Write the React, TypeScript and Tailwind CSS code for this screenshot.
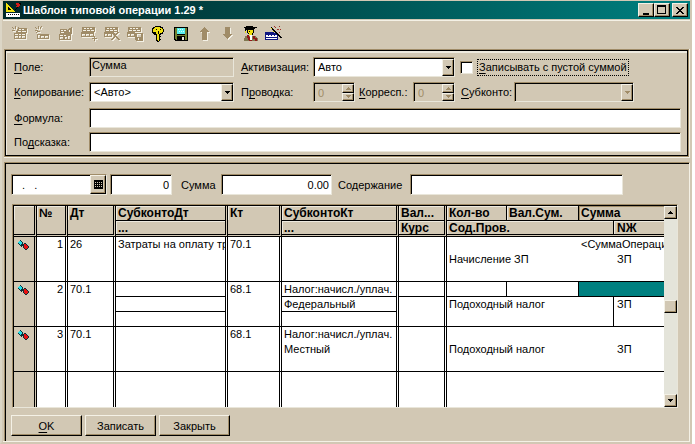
import { ReactNode } from 'react'
import clsx from 'clsx'

const SUNKEN =
   'border border-t-[#a08c68] border-l-[#a08c68] border-r-[#e9e6da] border-b-[#e9e6da] shadow-[inset_1px_1px_0_#000] rounded-none outline-none'
const RAISED =
   'border border-t-[#f4f1e6] border-l-[#f4f1e6] border-r-black border-b-black shadow-[inset_-1px_-1px_0_#a08c68] bg-[#d2c8b4]'

interface IRecord {
   num: string
   dt: string
   subDt: string[]
   kt: string
   subKt: string[]
   sum: string
   content: string
   journal: string
   active?: boolean
}

const records: IRecord[] = [
   {
      num: '1',
      dt: '26',
      subDt: ['Затраты на оплату труда'],
      kt: '70.1',
      subKt: [],
      sum: '<СуммаОперации>',
      content: 'Начисление ЗП',
      journal: 'ЗП',
   },
   {
      num: '2',
      dt: '70.1',
      subDt: [],
      kt: '68.1',
      subKt: ['Налог:начисл./уплач.', 'Федеральный'],
      sum: '',
      content: 'Подоходный налог',
      journal: 'ЗП',
      active: true,
   },
   {
      num: '3',
      dt: '70.1',
      subDt: [],
      kt: '68.1',
      subKt: ['Налог:начисл./уплач.', 'Местный'],
      sum: '',
      content: 'Подоходный налог',
      journal: 'ЗП',
   },
]

const Icon: React.FC<{ children: ReactNode }> = ({ children }) => (
   <svg width="18" height="18" viewBox="0 0 18 18" shapeRendering="crispEdges" fill="none" aria-hidden="true">
      {children}
   </svg>
)

// disabled glyph: a light copy one pixel down and right, then the shade colour
const Etched: React.FC<{ d: string }> = ({ d }) => (
   <Icon>
      <path d={d} fill="#f4f1e6" fillRule="evenodd" transform="translate(1 1)" />
      <path d={d} fill="#a08c68" fillRule="evenodd" />
   </Icon>
)

const SHEET_TOP = 'M1 1h13v5h-13z M3 2v1h2v-1z M6 2v1h2v-1z M9 2v1h2v-1z M2 4v1h3v-1z M6 4v1h3v-1z M10 4v1h3v-1z'
const SHEET_HALF = ' M0 6h8v5h-8z M1 8v2h2v-2z M4 8v2h3v-2z'

const toolbar: { label: string; disabled?: boolean; icon: ReactNode }[] = [
   {
      label: 'Новая операция',
      disabled: true,
      icon: (
         <Etched d="M0 1h1v1h-1z M3 0h1v3h-1z M6 1h1v1h-1z M1 2h1v1h-1z M5 2h1v1h-1z M0 4h3v1h-3z M5 2h10v5h-11v-2h1z M7 3v1h2v-1z M10 3v1h2v-1z M6 5v1h3v-1z M10 5v1h4v-1z M2 7h12v6h-12z M3 8v1h3v-1z M7 8v1h2v-1z M10 8v1h3v-1z M3 10v2h3v-2z M7 10v2h2v-2z M10 10v2h3v-2z" />
      ),
   },
   {
      label: 'Новая проводка',
      disabled: true,
      icon: (
         <Etched d="M0 1h1v1h-1z M3 0h1v3h-1z M6 0h1v1h-1z M1 2h1v1h-1z M5 1h1v2h-1z M0 4h3v1h-3z M2 5h3v1h-3z M1 6h1v1h-1z M2 8h12v5h-12z M3 9v3h2v-3z M6 10v2h3v-2z M10 10v2h3v-2z" />
      ),
   },
   {
      label: 'Изменить',
      disabled: true,
      icon: (
         <Etched d="M2 3h7v1h1v-1h1v-1h2v-1h1v7h-1v6h-12v-6h1z M3 4v1h2v-1z M6 4v1h2v-1z M3 6v1h3v-1z M2 9v1h3v-1z M6 9v1h2v-1z M2 11v2h3v-2z M10 10v3h2v-3z M11 4v2h1v-2z M7 11v2h2v-2z" />
      ),
   },
   {
      label: 'Добавить',
      disabled: true,
      icon: (
         <Etched
            d={SHEET_TOP + ' M0 6h13v5h-13z M1 8v2h3v-2z M5 8v2h3v-2z M9 8v2h3v-2z M13 10h1v2h2v1h-2v2h-1v-2h-2v-1h2z'}
         />
      ),
   },
   {
      label: 'Удалить',
      disabled: true,
      icon: (
         <Etched
            d={
               SHEET_TOP +
               SHEET_HALF +
               ' M8 6h2v1h1v1h1v-1h1v-1h2v1h-1v1h-1v1h-1v1h1v1h1v1h1v1h1v1h-2v-1h-1v-1h-1v-1h-1v1h-1v1h-1v1h-2v-1h1v-1h1v-1h1v-2h-1v-1h-1z'
            }
         />
      ),
   },
   {
      label: 'Сохранить проводку',
      disabled: true,
      icon: (
         <Etched d={SHEET_TOP + SHEET_HALF + ' M8 7h8v8h-7v-1h-1z M10 8v3h4v-3z M11 12v2h1v-2z'} />
      ),
   },
   {
      label: 'Ключ',
      icon: (
         <Icon>
            <path
               d="M5 0h6v1h2v2h1v3h-1v2h-2v1h-1v6h-1v1h-2v-1h-1v-6h-2v-1h-1v-1h-1v-5h1v-1h2z"
               fill="#000"
            />
            <path d="M5 1h5v1h2v1h1v3h-1v1h-2v1h-4v-1h-2v-1h-1v-3h1v-1h1z M7 8h2v7h-1v-1h-1z" fill="#f0e010" />
            <path d="M6 3h1v1h-1z M10 3h1v1h-1z M8 5h1v3h-1z M9 10h2v1h-2z M9 13h2v1h-2z M4 6h2v1h-2z" fill="#000" />
         </Icon>
      ),
   },
   {
      label: 'Сохранить',
      icon: (
         <Icon>
            <path d="M1 1h14v14h-13v-1h-1z" fill="#000" />
            <path d="M2 2h2v7h8v-7h2v12h-11v-1h-1z" fill="#708030" />
            <path d="M4 2h8v6h-8z" fill="#58f0f0" />
            <path d="M5 3h1v1h-1z M7 3h1v1h-1z M9 3h1v1h-1z M6 5h1v1h-1z M8 5h1v1h-1z M10 5h1v1h-1z" fill="#d8ffff" />
            <path d="M4 10h8v4h-8z" fill="#000" />
            <path d="M9 11h2v3h-2z" fill="#e8e4d8" />
         </Icon>
      ),
   },
   { label: 'Вверх', disabled: true, icon: <Etched d="M8 1h1v1h1v1h1v1h1v1h1v1h-2v8h-5v-8h-2v-1h1v-1h1v-1h1v-1h1z" /> },
   { label: 'Вниз', disabled: true, icon: <Etched d="M6 1h5v7h2v1h-1v1h-1v1h-1v1h-1v1h-1v-1h-1v-1h-1v-1h-1v-1h-1v-1h2z" /> },
   {
      label: 'Советчик',
      icon: (
         <Icon>
            <path d="M7 0h4v1h4v1h-2v1h-1v4h-1v2h-4v-1h-1v-1h-1v-3h-1v3h-1v-5h-1v-1h2v-1h3z" fill="#000" />
            <path d="M6 4h5v3h-1v2h-3v-2h-1z M3 5h1v2h-1z" fill="#f0e010" />
            <path d="M7 5h1v1h-1z" fill="#000" />
            <path d="M3 10h11v1h1v1h1v3h-14v-3h1z" fill="#807850" />
            <path d="M5 9h2v2h1v2h2v2h-3v-1h-1v-2h-1z M11 10h2v2h2v3h-2v-2h-2z" fill="#901818" />
            <path d="M8 9h2v5h-2z" fill="#fff" />
         </Icon>
      ),
   },
   {
      label: 'Мастер',
      icon: (
         <Icon>
            <path d="M0 6h9v1h2v1h2v6h-13z" fill="#101880" />
            <path d="M1 9h11v4h-11z" fill="#fff" />
            <path d="M3 9h1v1h-1z M6 9h1v1h-1z M9 9h1v1h-1z M1 11h11v1h-11z" fill="#101880" />
            <path
               d="M6 1h1v1h1v1h1v1h1v1h1v1h1v1h1v1h1v1h1v1h1v1h1v1h-2v-1h-1v-1h-1v-1h-1v-1h-1v-1h-1v-1h-1v-1h-1v-1h-1v-1h-1z"
               fill="#000"
            />
            <path d="M6 2h1v1h-1z M8 5h1v1h-1z" fill="#f0e010" />
            <path d="M10 1h1v1h-1z M14 0h1v1h-1z M12 3h2v1h-2z M15 3h1v1h-1z M14 6h1v1h-1z M9 0h1v1h-1z" fill="#a03028" />
         </Icon>
      ),
   },
]

const Triangle: React.FC<{ up?: boolean; className?: string }> = ({ up, className }) => (
   <svg width="5" height="3" viewBox="0 0 5 3" shapeRendering="crispEdges" className={className} aria-hidden="true">
      <path d={up ? 'M2 0h1v1h1v1h1v1h-5v-1h1v-1h1z' : 'M0 0h5v1h-1v1h-1v1h-1v-1h-1v-1h-1z'} fill="currentColor" />
   </svg>
)

const Letter: React.FC<{ children: string }> = ({ children }) => (
   <span className="underline underline-offset-2">{children}</span>
)

const Select: React.FC<{ id: string; value: string; disabled?: boolean; className: string }> = ({
   id,
   value,
   disabled,
   className,
}) => (
   <div className={clsx('relative h-5', className)}>
      <select
         id={id}
         disabled={disabled}
         className={clsx(
            'h-full w-full appearance-none pl-1 pr-4 opacity-100',
            SUNKEN,
            disabled ? 'bg-[#d2c8b4]' : 'bg-white'
         )}
      >
         <option>{value}</option>
      </select>
      <span
         className={clsx(
            'pointer-events-none absolute bottom-px right-px top-0.5 flex w-3 items-center justify-center',
            RAISED,
            disabled && 'text-[#a08c68]'
         )}
      >
         <Triangle />
      </span>
   </div>
)

const Spinner: React.FC<{ id: string }> = ({ id }) => (
   <div className={clsx('flex h-5 w-[42px] pl-1 pt-px text-[#a08c68]', SUNKEN)}>
      <input id={id} defaultValue="0" disabled className="w-0 flex-1 bg-transparent" />
      <div className="flex w-3 flex-col">
         <button disabled aria-label="Больше" className={clsx('flex flex-1 items-center justify-center', RAISED)}>
            <Triangle up />
         </button>
         <button disabled aria-label="Меньше" className={clsx('flex flex-1 items-center justify-center', RAISED)}>
            <Triangle />
         </button>
      </div>
   </div>
)

const Line: React.FC<{ children?: ReactNode; ruled?: boolean; className?: string }> = ({
   children,
   ruled,
   className,
}) => (
   <div
      className={clsx(
         'h-[15px] overflow-hidden whitespace-nowrap border-b pl-0.5',
         ruled ? 'border-black' : 'border-transparent',
         className
      )}
   >
      {children}
   </div>
)

const HeadCell: React.FC<{ top: string; bottom?: string }> = ({ top, bottom }) => (
   <th className="border-b-[3px] border-r-[3px] border-double border-black p-0 text-left align-top">
      <div
         className={clsx(
            'h-[15px] overflow-hidden border-b pl-0.5 shadow-[inset_1px_1px_0_#eeeadf]',
            bottom ? 'border-black' : 'border-transparent'
         )}
      >
         {top}
      </div>
      <div className={clsx('h-[13px] overflow-hidden pl-0.5', bottom && 'shadow-[inset_1px_1px_0_#eeeadf]')}>{bottom}</div>
   </th>
)

const CELL = 'border-b border-r-[3px] border-b-black [border-right-style:double] border-r-black p-0 align-top'

const Marker = () => (
   <svg width="13" height="11" viewBox="0 0 13 11" shapeRendering="crispEdges" className="ml-[3px] mt-[3px]" aria-hidden="true">
      <path
         d="M2 0h2v1h1v1h1v2h1v-1h2v1h1v1h1v1h1v2h-1v1h-1v1h-2v-1h-1v-1h-1v-2h-1v1h-1v-1h-1v-1h-1v-1h-1v-2h1v-1h1z"
         fill="#103038"
      />
      <path d="M2 1h2v1h1v2h-1v1h-1v-1h-1v-1h-1v-1h1z" fill="#20e0e8" />
      <path d="M7 4h2v1h1v1h1v2h-1v1h-2v-1h-1z" fill="#e81010" />
   </svg>
)

const PostingRow: React.FC<{ row: IRecord }> = ({ row }) => {
   const ruled = !!row.active
   const divider = ruled ? 'border-r border-r-black' : 'border-r border-r-transparent'

   return (
      <tr className="h-[45px]">
         <td className={clsx(CELL, 'bg-[#d2c8b4]')}>
            <Marker />
         </td>
         <td className={clsx(CELL, 'pr-0.5 text-right')}>{row.num}</td>
         <td className={clsx(CELL, 'pl-0.5')}>{row.dt}</td>
         <td className={CELL}>
            <Line ruled={ruled}>{row.subDt[0]}</Line>
            <Line ruled={ruled}>{row.subDt[1]}</Line>
         </td>
         <td className={clsx(CELL, 'pl-0.5')}>{row.kt}</td>
         <td className={CELL}>
            <Line ruled={ruled}>{row.subKt[0]}</Line>
            <Line ruled={ruled}>{row.subKt[1]}</Line>
         </td>
         <td className={CELL}>
            <Line ruled={ruled} />
         </td>
         <td className="border-b border-black p-0 align-top">
            <div className="flex">
               <Line ruled={ruled} className={clsx('w-[60px]', divider)} />
               <Line ruled={ruled} className={clsx('w-[72px]', divider)} />
               <Line ruled={ruled} className={clsx('w-0 flex-1', ruled && 'bg-[#008080]')}>
                  {row.sum}
               </Line>
            </div>
            <div className="flex h-[29px]">
               <div className={clsx('w-[167px] pl-0.5', divider)}>{row.content}</div>
               <div className="pl-[3px]">{row.journal}</div>
            </div>
         </td>
      </tr>
   )
}

const PostingsTable = () => (
   <div className={clsx('ml-px mr-[11px] mt-[9px] flex pl-px pt-px', SUNKEN)}>
      <table className="w-0 flex-1 table-fixed border-separate border-spacing-0 bg-white leading-[15px]">
         <colgroup>
            <col className="w-[23px]" />
            <col className="w-[31px]" />
            <col className="w-12" />
            <col className="w-28" />
            <col className="w-[54px]" />
            <col className="w-[117px]" />
            <col className="w-12" />
            <col />
         </colgroup>
         <thead className="bg-[#d2c8b4] text-[12px] leading-[15px]">
            <tr>
               <HeadCell top="" />
               <HeadCell top="№" />
               <HeadCell top="Дт" />
               <HeadCell top="СубконтоДт" bottom="..." />
               <HeadCell top="Кт" />
               <HeadCell top="СубконтоКт" bottom="..." />
               <HeadCell top="Вал..." bottom="Курс" />
               <th className="border-b-[3px] border-double border-black p-0 text-left align-top">
                  <div className="flex h-[15px] border-b border-black">
                     <div className="w-[60px] border-r border-black pl-0.5 shadow-[inset_1px_1px_0_#eeeadf]">Кол-во</div>
                     <div className="w-[72px] border-r border-black pl-0.5 shadow-[inset_1px_1px_0_#eeeadf]">Вал.Сум.</div>
                     <div className="flex-1 pl-0.5 shadow-[inset_1px_1px_0_#a08c68]">Сумма</div>
                  </div>
                  <div className="flex h-[13px]">
                     <div className="w-[167px] border-r border-black pl-0.5 shadow-[inset_1px_1px_0_#eeeadf]">Сод.Пров.</div>
                     <div className="flex-1 pl-[3px] shadow-[inset_1px_1px_0_#eeeadf]">NЖ</div>
                  </div>
               </th>
            </tr>
         </thead>
         <tbody>
            {records.map((row) => (
               <PostingRow key={row.num} row={row} />
            ))}
            <tr className="h-[35px]">
               <td className="border-r-[3px] border-double border-black bg-[#d2c8b4] p-0" />
               {[1, 2, 3, 4, 5, 6].map((n) => (
                  <td key={n} className="border-r-[3px] border-double border-black p-0" />
               ))}
               <td className="p-0" />
            </tr>
         </tbody>
      </table>
      <div className="flex w-[13px] flex-col justify-between bg-[#e4e4da]">
         <button aria-label="Прокрутить вверх" className={clsx('flex h-[13px] items-center justify-center', RAISED)}>
            <Triangle up />
         </button>
         <div className={clsx('h-[13px]', RAISED)} />
         <button aria-label="Прокрутить вниз" className={clsx('flex h-[13px] items-center justify-center', RAISED)}>
            <Triangle />
         </button>
      </div>
   </div>
)

const TitleBar = () => (
   <header className="flex h-[18px] items-center bg-linear-to-r from-[#002828] to-[#008080] pl-0.5 pr-0.5">
      <svg width="18" height="16" viewBox="0 0 18 16" shapeRendering="crispEdges" aria-hidden="true">
         <path d="M1 1h1v1h1v1h1v1h1v1h1v1h1v1h1v1h1v1h1v1h-9z" fill="#f0e010" />
         <path d="M3 5h1v1h1v1h1v1h-3z" fill="#000" />
         <path d="M10 7h1v-1h1v-1h1v-1h1v-3h2v2h-1v1h-1v1h-1v1h-1v1h-1v1h-1z" fill="#000" />
         <path d="M11 1h3v1h1v2h-1v1h-3v-1h1v-1h-1z" fill="#d01818" />
         <path d="M1 11h14v4h-14z" fill="#fff" />
         <path d="M3 12h1v1h-1z M5 12h1v1h-1z M7 12h1v1h-1z M9 12h1v1h-1z M11 12h1v1h-1z M13 12h1v1h-1z" fill="#000" />
      </svg>
      <h1 className="flex-1 text-[11px] font-bold leading-4 text-white">Шаблон типовой операции 1.29 *</h1>
      <button aria-label="Свернуть" className={clsx('flex h-3.5 w-4 items-center justify-center', RAISED)}>
         <svg width="10" height="9" viewBox="0 0 10 9" shapeRendering="crispEdges">
            <path d="M2 7h6v2h-6z" />
         </svg>
      </button>
      <button aria-label="Развернуть" className={clsx('flex h-3.5 w-4 items-center justify-center', RAISED)}>
         <svg width="10" height="10" viewBox="0 0 10 10" shapeRendering="crispEdges">
            <path d="M0 0h9v9h-9z M1 2v6h7v-6z" fillRule="evenodd" />
         </svg>
      </button>
      <button aria-label="Закрыть окно" className={clsx('ml-0.5 flex h-3.5 w-4 items-center justify-center', RAISED)}>
         <svg width="8" height="7" viewBox="0 0 8 7" shapeRendering="crispEdges">
            <path d="M0 0h2v1h1v1h2v-1h1v-1h2v1h-1v1h-1v1h-1v1h1v1h1v1h1v1h-2v-1h-1v-1h-2v1h-1v1h-2v-1h1v-1h1v-1h1v-1h-1v-1h-1v-1h-1z" />
         </svg>
      </button>
   </header>
)

const App = () => (
   <main className="mr-[3px] border-x-2 border-b-2 border-t border-b-[#d2c8b4] border-l-[#dcd6c6] border-r-[#d2c8b4] border-t-[#d2c8b4] bg-[#d2c8b4] pl-px font-['Liberation_Sans',Arial,sans-serif] text-[11px] leading-4 text-black">
      <TitleBar />

      <nav className="mt-px flex h-[29px] items-center border-t border-[#f4f1e6] pl-[9px]">
         {toolbar.map((tool) => (
            <button key={tool.label} aria-label={tool.label} disabled={tool.disabled} className="w-[23px]">
               {tool.icon}
            </button>
         ))}
      </nav>

      <form className="ml-px border-b border-r border-[#f4f1e6]">
         <div className="border border-[#a08c68]">
            <div className="flex flex-col border border-black pb-[3px] pl-2 pr-1.5 pt-[6px] shadow-[inset_1px_2px_0_#eeeadf]">
               <div className="flex h-5 items-center">
                  <label htmlFor="field" className="w-[75px]">
                     <Letter>П</Letter>оле:
                  </label>
                  <input id="field" readOnly defaultValue="Сумма" className={clsx('h-5 w-[145px] pb-1 pl-0.5', SUNKEN)} />
                  <label htmlFor="activation" className="ml-[7px] w-[72px]">
                     <Letter>А</Letter>ктивизация:
                  </label>
                  <Select id="activation" value="Авто" className="w-[142px]" />
                  <input
                     id="empty"
                     type="checkbox"
                     className={clsx('ml-[5px] size-[13px] appearance-none bg-white', SUNKEN)}
                  />
                  <label htmlFor="empty" className="ml-1 border border-dotted border-black px-px leading-[15px]">
                     <Letter>З</Letter>аписывать с пустой суммой
                  </label>
               </div>
               <div className="mt-[5px] flex h-5 items-center">
                  <label htmlFor="copy" className="w-[75px]">
                     <Letter>К</Letter>опирование:
                  </label>
                  <Select id="copy" value="<Авто>" className="w-[145px]" />
                  <label htmlFor="posting" className="ml-[7px] w-[72px]">
                     П<Letter>р</Letter>оводка:
                  </label>
                  <Spinner id="posting" />
                  <label htmlFor="corr" className="ml-1 w-[54px]">
                     <Letter>К</Letter>орресп.:
                  </label>
                  <Spinner id="corr" />
                  <label htmlFor="sub" className="ml-[6px] w-[53px]">
                     <Letter>С</Letter>убконто:
                  </label>
                  <Select id="sub" value="" disabled className="w-[120px]" />
               </div>
               <div className="mt-[6px] flex h-5 items-center">
                  <label htmlFor="formula" className="w-[75px]">
                     <Letter>Ф</Letter>ормула:
                  </label>
                  <input id="formula" className={clsx('h-5 flex-1 bg-white px-1', SUNKEN)} />
               </div>
               <div className="mt-1 flex h-5 items-center">
                  <label htmlFor="hint" className="w-[75px]">
                     По<Letter>д</Letter>сказка:
                  </label>
                  <input id="hint" className={clsx('h-5 flex-1 bg-white px-1', SUNKEN)} />
               </div>
            </div>
         </div>
      </form>

      <section className="ml-px mt-1 border-l border-r border-t border-l-[#a08c68] border-r-[#f4f1e6] border-t-[#a08c68]">
         <div className="border-l border-t border-black pb-[5px] pl-[5px] pt-[10px]">
            <div className="flex h-[21px] items-center">
               <div className={clsx('flex h-full w-24 bg-white', SUNKEN)}>
                  <input aria-label="Дата" defaultValue="  .   ." className="w-0 flex-1 pl-1 outline-none" />
                  <button aria-label="Календарь" className={clsx('flex w-4 items-center justify-center', RAISED)}>
                     <svg width="9" height="9" viewBox="0 0 9 9" shapeRendering="crispEdges">
                        <path
                           d="M0 0h9v9h-9z M1 2v1h1v-1z M3 2v1h1v-1z M5 2v1h1v-1z M7 2v1h1v-1z M1 4v1h1v-1z M3 4v1h1v-1z M5 4v1h1v-1z M7 4v1h1v-1z M1 6v1h1v-1z M3 6v1h1v-1z M5 6v1h1v-1z M7 6v1h1v-1z"
                           fillRule="evenodd"
                        />
                     </svg>
                  </button>
               </div>
               <input
                  aria-label="Количество"
                  defaultValue="0"
                  className={clsx('ml-[3px] h-full w-[62px] bg-white pr-0.5 text-right', SUNKEN)}
               />
               <label htmlFor="sum" className="w-[49px] pl-[9px]">
                  Сумма
               </label>
               <input
                  id="sum"
                  defaultValue="0.00"
                  className={clsx('h-full w-[111px] bg-white pr-0.5 text-right', SUNKEN)}
               />
               <label htmlFor="content" className="w-[78px] pl-[6px]">
                  Содержание
               </label>
               <input id="content" className={clsx('h-full w-[213px] bg-white px-1', SUNKEN)} />
            </div>

            <PostingsTable />

            <div className="mt-[7px] flex gap-[3px]">
               <button className={clsx('h-[21px] w-[71px]', RAISED)}>
                  <Letter>O</Letter>K
               </button>
               <button className={clsx('h-[21px] w-[71px]', RAISED)}>Записать</button>
               <button className={clsx('h-[21px] w-[71px]', RAISED)}>Закрыть</button>
            </div>
         </div>
      </section>
      <div className="h-px bg-[#f4f1e6]" />
   </main>
)

export default App
